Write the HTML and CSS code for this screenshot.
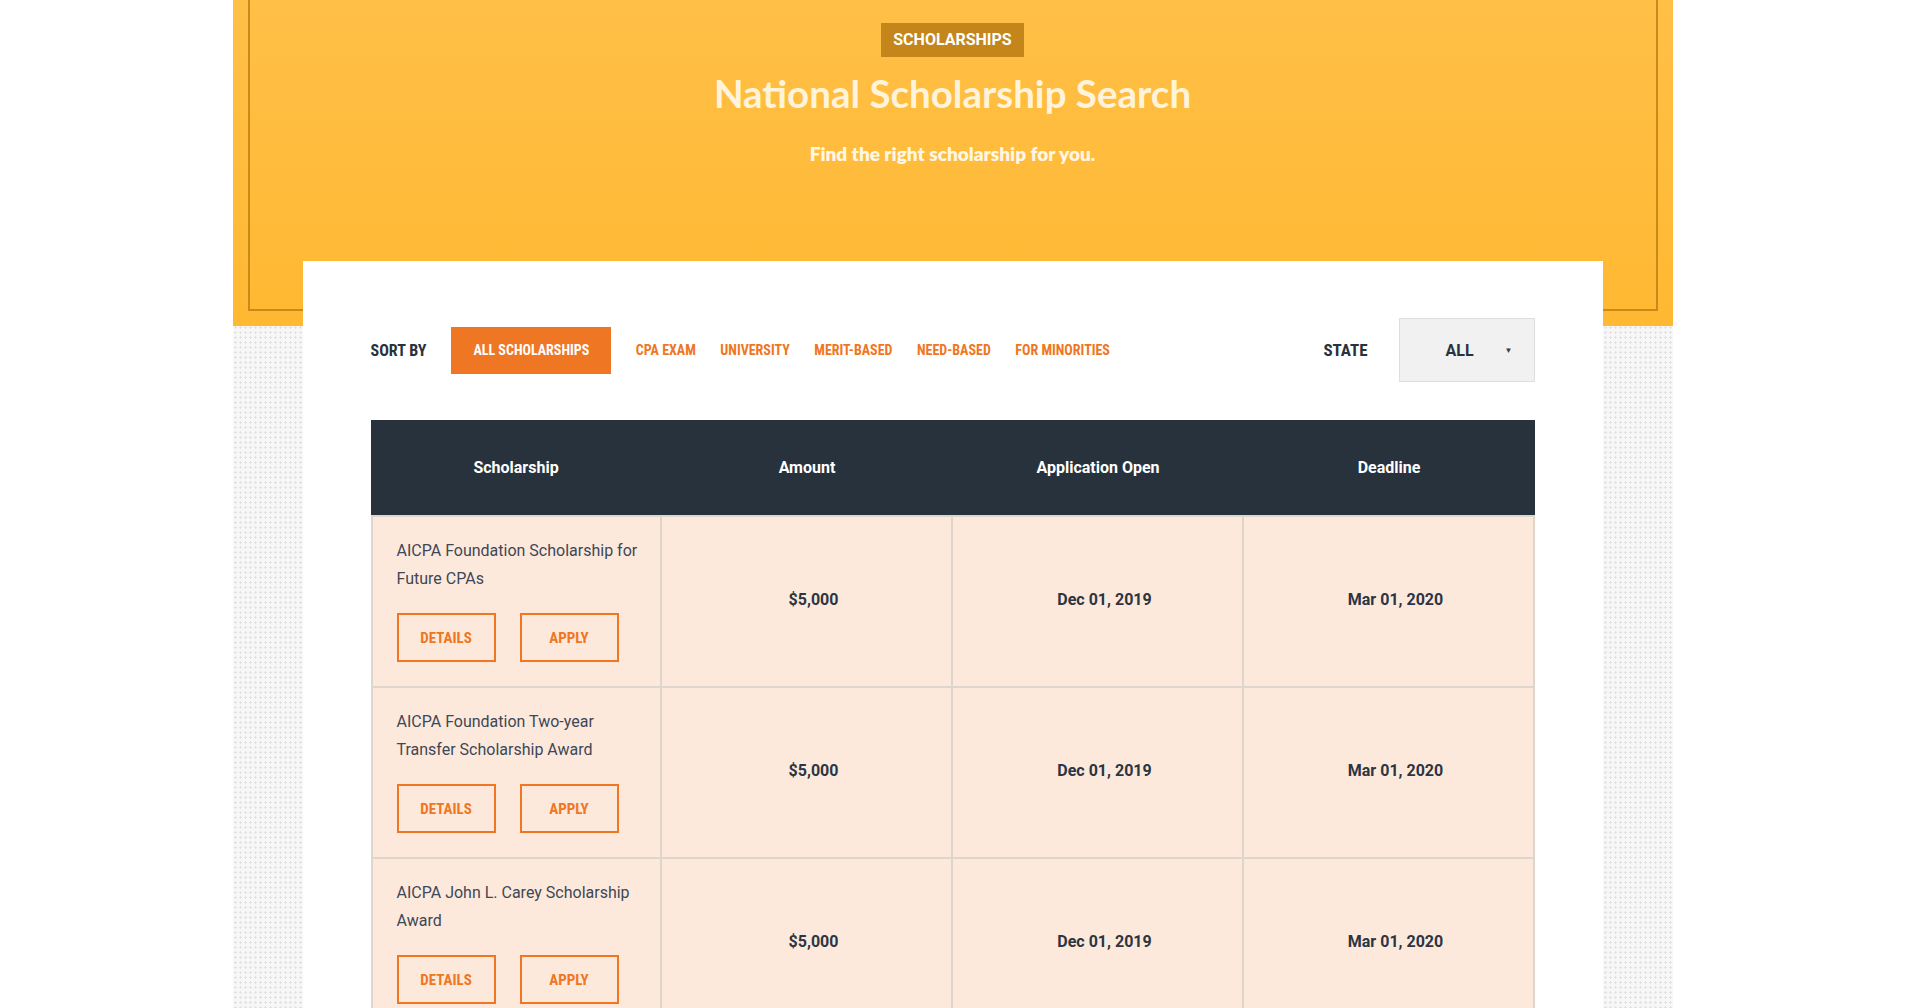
FILE: index.html
```html
<!DOCTYPE html>
<html lang="en">
<head>
<meta charset="utf-8">
<title>National Scholarship Search</title>
<link rel="stylesheet" href="styles.css">
</head>
<body>
<div class="page">
  <header class="hero">
    <div class="hero-frame"></div>
    <span class="hero-label">SCHOLARSHIPS</span>
    <h1 class="hero-title">National Scholarship Search</h1>
    <p class="hero-sub">Find the right scholarship for you.</p>
  </header>

  <main class="card">
    <div class="filters">
      <span class="filter-label">SORT BY</span>
      <a class="filter-btn active">ALL SCHOLARSHIPS</a>
      <a class="filter-btn">CPA EXAM</a>
      <a class="filter-btn">UNIVERSITY</a>
      <a class="filter-btn">MERIT-BASED</a>
      <a class="filter-btn">NEED-BASED</a>
      <a class="filter-btn">FOR MINORITIES</a>
      <span class="filter-label state-label">STATE</span>
      <div class="select">
        <span class="select-value">ALL</span>
        <span class="select-arrow">&#9660;</span>
      </div>
    </div>

    <div class="table">
      <div class="th">Scholarship</div>
      <div class="th">Amount</div>
      <div class="th">Application Open</div>
      <div class="th">Deadline</div>

      <div class="td td-name">
        <p class="name">AICPA Foundation Scholarship for Future CPAs</p>
        <div class="actions"><a class="btn-outline">DETAILS</a><a class="btn-outline">APPLY</a></div>
      </div>
      <div class="td td-val">$5,000</div>
      <div class="td td-val">Dec 01, 2019</div>
      <div class="td td-val">Mar 01, 2020</div>

      <div class="td td-name">
        <p class="name">AICPA Foundation Two-year Transfer Scholarship Award</p>
        <div class="actions"><a class="btn-outline">DETAILS</a><a class="btn-outline">APPLY</a></div>
      </div>
      <div class="td td-val">$5,000</div>
      <div class="td td-val">Dec 01, 2019</div>
      <div class="td td-val">Mar 01, 2020</div>

      <div class="td td-name">
        <p class="name">AICPA John L. Carey Scholarship Award</p>
        <div class="actions"><a class="btn-outline">DETAILS</a><a class="btn-outline">APPLY</a></div>
      </div>
      <div class="td td-val">$5,000</div>
      <div class="td td-val">Dec 01, 2019</div>
      <div class="td td-val">Mar 01, 2020</div>
    </div>
  </main>
</div>
</body>
</html>
```

FILE: styles.css
```css
* { box-sizing: border-box; }

html, body {
  margin: 0;
  padding: 0;
  background: #ffffff;
  font-family: Roboto, "Liberation Sans", Arial, sans-serif;
}

.page {
  width: 1440px;
  margin: 0 auto;
  background-color: #f7f7f7;
  background-image: radial-gradient(#e3e3e3 1px, transparent 1.3px);
  background-size: 5px 5px;
  padding-bottom: 60px;
}

.hero {
  position: relative;
  height: 326px;
  padding-top: 23px;
  text-align: center;
  background: linear-gradient(180deg, #ffc048 0%, #ffb831 100%);
}

.hero-frame {
  position: absolute;
  top: -20px;
  left: 15px;
  right: 15px;
  bottom: 15px;
  border: 2px solid #c98a1a;
  pointer-events: none;
}

.hero-label {
  position: relative;
  display: inline-block;
  height: 34px;
  line-height: 34px;
  padding: 0 12px;
  background: #c4861a;
  color: #ffffff;
  font-family: Roboto, sans-serif;
  font-weight: 700;
  font-size: 16px;
}

.hero-title {
  position: relative;
  margin: 14px 0 0;
  font-family: Lato, "Open Sans", sans-serif;
  font-weight: 700;
  font-size: 38.5px;
  line-height: 44px;
  color: #fff3da;
}

.hero-sub {
  position: relative;
  margin: 27px 0 0;
  font-family: Lato, "Open Sans", sans-serif;
  font-weight: 800;
  font-size: 19px;
  line-height: 24px;
  color: #fff6e4;
}

.card {
  position: relative;
  width: 1300px;
  margin: -65px auto 0;
  background: #ffffff;
  padding: 57px 68px 40px;
}

.filters {
  display: flex;
  align-items: center;
  height: 64px;
}

.filter-label,
.filter-btn,
.btn-outline {
  font-family: "Roboto Condensed", "Liberation Sans Narrow", "DejaVu Sans Condensed", Roboto, sans-serif;
  font-weight: 700;
  text-transform: uppercase;
}

.filter-label {
  font-size: 16px;
  color: #28323d;
  margin-right: 25px;
}

.filter-btn {
  font-size: 14px;
  color: #ef7622;
  margin-right: 24.5px;
  text-decoration: none;
  cursor: pointer;
}

.filter-btn.active {
  display: flex;
  align-items: center;
  height: 47px;
  padding: 0 22px;
  background: #ef7622;
  color: #ffffff;
}

.state-label {
  margin-left: auto;
  margin-right: 31px;
  font-size: 17px;
}

.select {
  display: flex;
  align-items: center;
  width: 136px;
  height: 64px;
  padding: 0 21px 0 46px;
  background: #f1f1f1;
  border: 1px solid #dedede;
  font-weight: 700;
  font-size: 16px;
  color: #28323d;
}

.select-arrow {
  margin-left: auto;
  font-size: 8px;
  color: #3a3f46;
}

.table {
  margin-top: 38px;
  display: grid;
  grid-template-columns: repeat(4, 1fr);
}

.th {
  height: 97px;
  display: flex;
  align-items: center;
  justify-content: center;
  background: #28323d;
  color: #ffffff;
  font-weight: 700;
  font-size: 16px;
  border-bottom: 2px solid #ded5cd;
}

.td {
  background: #fde9dc;
  border-right: 2px solid #ded5cd;
  border-bottom: 2px solid #ded5cd;
}

.td-name {
  border-left: 2px solid #ded5cd;
  padding: 20px 18px 24px 24px;
}

.name {
  margin: 0;
  font-size: 16px;
  line-height: 28px;
  color: #3d4756;
}

.actions {
  display: flex;
  gap: 24px;
  margin-top: 20px;
}

.btn-outline {
  display: flex;
  align-items: center;
  justify-content: center;
  width: 99px;
  height: 49px;
  border: 2px solid #ef7622;
  color: #ef7622;
  font-size: 15px;
  text-decoration: none;
  cursor: pointer;
}

.td-val {
  display: flex;
  align-items: center;
  justify-content: center;
  padding-left: 15px;
  padding-bottom: 4px;
  font-weight: 700;
  font-size: 16px;
  color: #2c3541;
}
```
